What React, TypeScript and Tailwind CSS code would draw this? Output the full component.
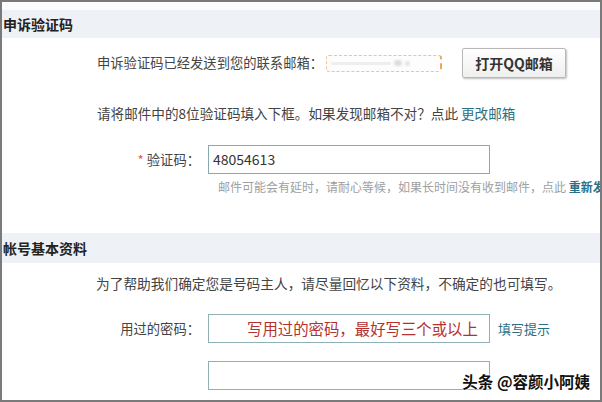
import React from "react";

const font = { fontFamily: '"Noto Sans CJK SC", "Microsoft YaHei", sans-serif' };

export default function App() {
  return (
    <div
      className="w-[602px] h-[402px] border-2 border-[#7a7a7a] bg-white overflow-hidden relative text-[#333]"
      style={font}
    >
      <div className="h-[8px] bg-[#fbfcfd]" />
      {/* Header 1 */}
      <div className="h-[28px] bg-[#eef2f6] flex items-center pl-[1px] text-[14px] font-bold text-[#222]">
        申诉验证码
      </div>

      {/* Row 1 */}
      <div className="mt-[10px] h-[30px] flex items-center">
        <div className="w-[95px] shrink-0" />
        <span className="text-[13.3px] text-[#444] w-[229px] whitespace-nowrap">申诉验证码已经发送到您的联系邮箱：</span>
        <div className="w-[116px] h-[17px] border border-dashed border-[#f0c48a] border-r-[#e8a860] border-r-2 border-r-solid rounded-[3px] bg-[#fdfdfd] flex items-center px-[4px] gap-[3px]">
          <div className="w-[60px] h-[3px] bg-[#eee] rounded" />
          <div className="w-[8px] h-[6px] bg-[#ddd] rounded-full blur-[1px]" />
          <div className="w-[5px] h-[5px] bg-[#e2e2e2] rounded-full blur-[1px]" />
        </div>
        <button className="ml-[20px] w-[104px] h-[30px] border border-[#b8b8b8] rounded-[2px] bg-gradient-to-b from-[#ffffff] to-[#efefef] shadow-[1px_1px_2px_rgba(0,0,0,0.25)] text-[14px] font-bold text-[#333] flex items-center justify-center">
          打开QQ邮箱
        </button>
      </div>

      {/* Row 2 */}
      <div className="mt-[25px] h-[20px] flex items-center">
        <div className="w-[95px] shrink-0" />
        <span className="text-[13.6px] text-[#444] whitespace-nowrap">
          请将邮件中的8位验证码填入下框。如果发现邮箱不对？点此{" "}
          <span className="text-[#2b6f86]">更改邮箱</span>
        </span>
      </div>

      {/* Row 3 */}
      <div className="mt-[22px] h-[29px] flex items-center">
        <div className="w-[198px] flex justify-end items-center text-[13.3px] text-[#444]">
          <span className="text-[#e05a5a] mr-[3px]">*</span>验证码：
        </div>
        <div className="ml-[8px] w-[282px] h-[29px] border border-[#86aab0] flex items-center pl-[4px] text-[14px] text-[#333]">
          48054613
        </div>
      </div>

      {/* Hint */}
      <div className="mt-[5px] h-[16px] flex items-center whitespace-nowrap">
        <div className="w-[216px] shrink-0" />
        <span className="text-[12px] text-[#a0a0a0]">
          邮件可能会有延时，请耐心等候，如果长时间没有收到邮件，点此{" "}
          <span className="text-[#2b6f86] font-bold">重新发送</span>
        </span>
      </div>

      {/* Header 2 */}
      <div className="mt-[38px] h-[30px] bg-[#eef2f6] flex items-center pl-[1px] text-[14px] font-bold text-[#222]">
        帐号基本资料
      </div>

      {/* Row 4 */}
      <div className="mt-[10px] h-[20px] flex items-center">
        <div className="w-[94px] shrink-0" />
        <span className="text-[13.7px] text-[#444] whitespace-nowrap">
          为了帮助我们确定您是号码主人，请尽量回忆以下资料，不确定的也可填写。
        </span>
      </div>

      {/* Row 5 */}
      <div className="mt-[21px] h-[29px] flex items-center">
        <div className="w-[198px] flex justify-end text-[13.3px] text-[#444]">用过的密码：</div>
        <div className="ml-[8px] w-[282px] h-[29px] border border-[#8fb0b5] flex items-center pl-[38px] text-[15.4px] text-[#b5312f] whitespace-nowrap">
          写用过的密码，最好写三个或以上
        </div>
        <span className="ml-[8px] text-[13px] text-[#2b6f86]">填写提示</span>
      </div>

      {/* Row 6 */}
      <div className="mt-[18px] h-[29px] flex items-center">
        <div className="w-[198px]" />
        <div className="ml-[8px] w-[282px] h-[29px] border border-[#8fb0b5]" />
      </div>

      {/* Watermark */}
      <div
        className="absolute right-[10px] bottom-[7px] text-[15.5px] font-bold text-[#111]"
        style={{ textShadow: "0 0 2px #fff, 0 0 2px #fff, 0 0 3px #fff" }}
      >
        头条 @容颜小阿姨
      </div>
    </div>
  );
}
